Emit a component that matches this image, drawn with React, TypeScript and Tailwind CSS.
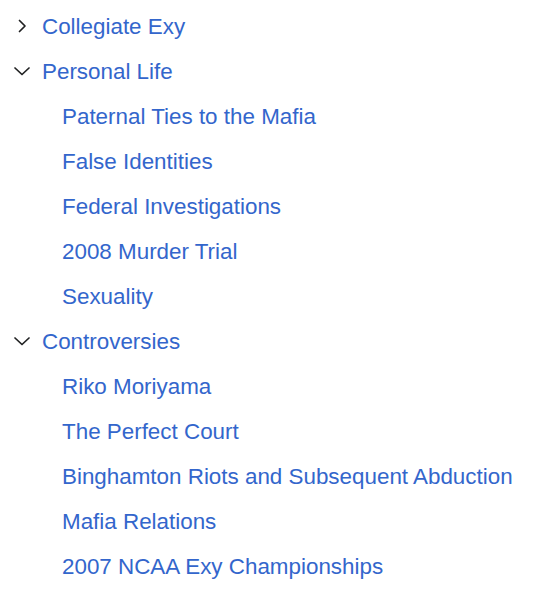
import React from "react";

type Item = { label: string; level: 1 | 2; state?: "open" | "closed" };

const items: Item[] = [
  { label: "Collegiate Exy", level: 1, state: "closed" },
  { label: "Personal Life", level: 1, state: "open" },
  { label: "Paternal Ties to the Mafia", level: 2 },
  { label: "False Identities", level: 2 },
  { label: "Federal Investigations", level: 2 },
  { label: "2008 Murder Trial", level: 2 },
  { label: "Sexuality", level: 2 },
  { label: "Controversies", level: 1, state: "open" },
  { label: "Riko Moriyama", level: 2 },
  { label: "The Perfect Court", level: 2 },
  { label: "Binghamton Riots and Subsequent Abduction", level: 2 },
  { label: "Mafia Relations", level: 2 },
  { label: "2007 NCAA Exy Championships", level: 2 },
];

function Chevron({ open }: { open: boolean }) {
  return (
    <svg width="20" height="20" viewBox="0 0 20 20" className="text-[#202122]">
      {open ? (
        <path d="M3 7 L10 13.5 L17 7" fill="none" stroke="currentColor" strokeWidth="1.7" strokeLinecap="round" strokeLinejoin="round" />
      ) : (
        <path d="M7.5 4.5 L13 10 L7.5 15.5" fill="none" stroke="currentColor" strokeWidth="1.7" strokeLinecap="round" strokeLinejoin="round" />
      )}
    </svg>
  );
}

export default function App() {
  return (
    <div className="w-[540px] h-[596px] bg-white pt-[4px] font-['Liberation_Sans',Arial,sans-serif]">
      <ul>
        {items.map((it) => (
          <li key={it.label} className="h-[45px] flex items-center">
            {it.level === 1 ? (
              <div className="flex items-center">
                <div className="w-[20px] ml-[12px] mr-[10px] flex items-center justify-center">
                  <Chevron open={it.state === "open"} />
                </div>
                <span className="text-[22.4px] text-[#3366cc]">{it.label}</span>
              </div>
            ) : (
              <span className="ml-[62px] text-[22.4px] text-[#3366cc]">{it.label}</span>
            )}
          </li>
        ))}
      </ul>
    </div>
  );
}
